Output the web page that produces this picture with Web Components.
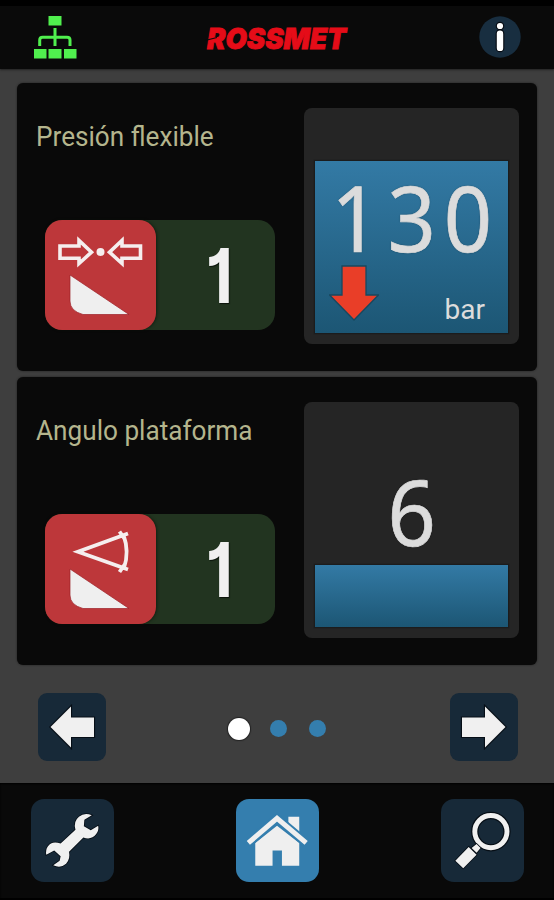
<!DOCTYPE html>
<html lang="es">
<head>
<meta charset="utf-8">
<title>Rossmet</title>
<style>
html,body{margin:0;height:100%;background:#3e3e3e;overflow:hidden}
</style>
</head>
<body>
<rm-app></rm-app>
<script>
const define = (name, html) => {
  const t = document.createElement('template');
  t.innerHTML = html;
  customElements.define(name, class extends HTMLElement {
    constructor() {
      super();
      this.attachShadow({mode: 'open'}).append(t.content.cloneNode(true));
    }
  });
};

/* Each symbol is a viewBox and its artwork. */
const blade = '<path d="M25 55 L84 94.500H38Q25 91 25 81Z" fill="#efefef" stroke="#9c2026" stroke-width=".7"/>';
const ICONS = {
  network: ['0 0 43 43', '<g fill="#50f04e"><rect x="14.500" y="0" width="13" height="9.500"/><rect x="0" y="33" width="12.500" height="9.500"/><rect x="14.500" y="33" width="13" height="9.500"/><rect x="30" y="33" width="12.500" height="9.500"/></g><path d="M21 12V30M5.700 30V24Q5.700 21.200 8.700 21.200H33Q36 21.200 36 24V30" fill="none" stroke="#50f04e" stroke-width="3"/>'],
  info: ['0 0 42 42', '<circle cx="21" cy="21" r="20.700" fill="#182e40"/><g fill="#fff" stroke="#080d14" stroke-width="2.400" paint-order="stroke"><circle cx="21" cy="10" r="3.100"/><rect x="17.800" y="14.500" width="6.400" height="20.600" rx="3.200"/></g>'],
  pressure: ['0 0 111 111', '<g fill="none" stroke="#f5eeee" stroke-width="3.600"><path d="M15 26H34V20.500L46.500 32.200L34 43.500V38.200H15Z"/><path d="M95.500 26H77V20.500L64.500 32.200L77 43.500V38.200H95.500Z"/></g><circle cx="55.500" cy="32" r="4" fill="#f5eeee"/>' + blade],
  angle: ['0 0 111 111', '<path d="M83 19.500L33 37.700L83 55.500M78.500 21Q84.500 37.500 79 54M74.500 17.500L80 25.500M74.500 58L80 50" fill="none" stroke="#f5eeee" stroke-width="3.800"/>' + blade],
  left: ['0 0 68 68', '<path d="M12.500 34L33 13.500V24.500H56V44H33V54.500Z" fill="#f0f0f0" stroke="#060e16" stroke-width="2.200" paint-order="stroke"/>'],
  right: ['0 0 68 68', '<path d="M55.500 34L35 13.500V24.500H12V44H35V54.500Z" fill="#f0f0f0" stroke="#060e16" stroke-width="2.200" paint-order="stroke"/>'],
  wrench: ['0 0 84 84', '<path d="M61.500 16.500Q54 13.500 48.500 18Q42.500 23 45 31L30 45Q21 42 17 48Q14.500 51.500 15.500 56.500L23.500 52L30 58L29 62.500L22.500 67Q30 70.500 35.500 65.500Q40 61 38.500 53.500L53 39Q61 42 66 35.500Q69 31.500 68 27L60.500 31.500L53.500 27.500L54 21Z" fill="#f0f0f0" stroke="#060e16" stroke-width="1.600" paint-order="stroke"/>'],
  home: ['0 0 84 84', '<path d="M41.500 27L19.500 44.500V67.500H37V52H46.500V67.500H64V44.500Z" fill="#efefef"/><path d="M53 18H64V34L53 25Z" fill="#efefef"/><path d="M12.500 44.500L41.500 19.500L71 44.500" fill="none" stroke="#347eae" stroke-width="9"/><path d="M12.500 44.500L41.500 19.500L71 44.500" fill="none" stroke="#efefef" stroke-width="5"/>'],
  search: ['0 0 84 84', '<circle cx="50.500" cy="33" r="16.300" stroke="#060e16" stroke-width="7.500" fill="none"/><circle cx="50.500" cy="33" r="16.300" fill="none" stroke="#f0f0f0" stroke-width="5"/><path d="M31 49.500L36 45.500L40 49.500L36 54.500Z M28 48.500L36 56.500L22.500 70L14.500 62.500Z" fill="#f0f0f0" stroke="#060e16" stroke-width="1.600" paint-order="stroke"/>'],
  down: ['0 0 50 56', '<path d="M13 1H37V30H49.500L25 55L.5 30H13Z" fill="#e93e28" stroke="#17485f" stroke-width="1.300"/>']
};
customElements.define('rm-icon', class extends HTMLElement {
  constructor() { super(); this.attachShadow({mode: 'open'}); }
  connectedCallback() {
    const [box, art] = ICONS[this.getAttribute('name')];
    this.shadowRoot.innerHTML = `<style>:host{display:block}svg{display:block;width:100%;height:100%}</style><svg viewBox="${box}">${art}</svg>`;
  }
});

define('rm-tile', `<style>
:host{display:block;box-sizing:border-box;width:83px;height:83px;border-radius:13px;background:#172938}
:host([active]){background:#347eae}
:host([small]){width:68px;height:68px;border-radius:9px}
::slotted(*){width:100%;height:100%}
</style><slot></slot>`);

define('rm-logo', `<style>
:host{display:block;width:160px;height:40px}svg{display:block}
text{font:italic 900 28.500px Inter,sans-serif;fill:#e50c18;stroke:#e50c18;stroke-width:.8}
</style><svg width="160" height="40" viewBox="0 0 160 40"><text x="10" y="32.500" textLength="139" lengthAdjust="spacingAndGlyphs">ROSSMET</text><path d="M8 24.500L20 21.500" stroke="#0a0a0a" stroke-width="1.200"/></svg>`);

define('rm-selector', `<style>
:host{display:flex;width:230px;height:110px;border-radius:17px;background:#223420}
.symbol{width:111px;height:110px;border-radius:17px;background:#bd373a;box-shadow:1px 0 3px #06130699}
.value{flex:1;display:grid;place-items:center;color:#f0f0f0;font:700 76px/110px Inter,sans-serif;font-feature-settings:"cv01" 1}
.value span{display:block;padding-left:10px;margin-top:-1px;text-shadow:1px 1px 1px #0b140b;transform:scaleX(.85)}
::slotted(rm-icon){width:111px;height:111px}
</style><div class="symbol"><slot name="icon"></slot></div><div class="value"><span><slot></slot></span></div>`);

define('rm-gauge', `<style>
:host{display:grid;box-sizing:border-box;width:215px;height:236px;padding:10px 11px 11px;border-radius:8px;background:#252525;color:#dcdcdc;grid-template:215px/1fr}
.fill,.content{grid-area:1/1}
.fill{align-self:end;height:var(--level);background:linear-gradient(#337aa5,#1c5674);box-shadow:0 0 1px 1px #1b1c1d}
.content{display:grid;grid-template-rows:147px 68px;z-index:1}
.value{font:400 91px/100px "Noto Sans",sans-serif;letter-spacing:8.500px;text-align:center;padding:49px 0 0 9px;height:98px;text-shadow:0 0 2px #0006;-webkit-text-stroke:.7px #dcdcdc;transform:scaleX(.93)}
.foot{display:flex;justify-content:space-between;align-items:flex-start;padding:0 23px 0 14px;font:400 28px/32px Roboto,sans-serif}
::slotted([slot=unit]){margin-top:29px}
::slotted(rm-icon){width:50px;height:56px}
</style><div class="fill"></div><div class="content"><div class="value"><slot></slot></div><div class="foot"><slot name="trend"></slot><slot name="unit"></slot></div></div>`);

define('rm-card', `<style>
:host{display:flex;justify-content:space-between;box-sizing:border-box;width:519.500px;height:288px;padding:25px 17.500px 0 19px;border-radius:6px;background:#090909;box-shadow:0 0 2px #1b1b1b}
.left{display:grid;grid-template-rows:112px 110px}
h2{margin:0;padding-top:12px;font:400 27px/34px Roboto,sans-serif;transform:scaleX(.969);transform-origin:0 0;color:#b4b58d;white-space:nowrap;width:max-content}
.control{padding-left:8.500px}
</style><div class="left"><h2><slot name="title"></slot></h2><div class="control"><slot name="control"></slot></div></div><slot name="gauge"></slot>`);

define('rm-dots', `<style>
:host{display:flex;align-items:center;gap:21.500px}
i{width:17.500px;height:17.500px;border-radius:50%;background:#347eae}
.on{width:22px;height:22px;background:#fff;box-shadow:0 0 1px 1px #222;margin-right:-2px}
</style><i class="on"></i><i></i><i></i>`);

define('rm-app', `<style>
:host{display:grid;grid-template-rows:69px 714px 117px;width:554px;height:900px;background:#3e3e3e}
header{display:flex;justify-content:space-between;align-items:flex-start;box-sizing:border-box;padding:16px 33px 0 34px;background:#0a0a0a;box-shadow:inset 0 6px #000,0 1px 2px #222}
header rm-icon:first-child{width:43px;height:43px}
header rm-icon:last-child{width:42px;height:42px}
rm-logo{margin:0 3px 0 0}
main{display:flex;flex-direction:column;gap:6px;padding:14px 17px 0}
nav{display:flex;align-items:center;justify-content:space-between;padding:22px 19.500px 0 20.500px}
nav rm-dots{padding:3px 1px 0 0}
footer{display:flex;justify-content:space-between;align-items:flex-start;padding:16px 30px 0 31px;background:#090909;box-shadow:inset 0 -2px #000,inset 0 1px 2px #000}
</style>
<header><rm-icon name="network"></rm-icon><rm-logo></rm-logo><rm-icon name="info"></rm-icon></header>
<main>
<rm-card><span slot="title">Presión flexible</span>
<rm-selector slot="control"><rm-icon slot="icon" name="pressure"></rm-icon>1</rm-selector>
<rm-gauge slot="gauge" style="--level:172px">130<rm-icon slot="trend" name="down"></rm-icon><span slot="unit">bar</span></rm-gauge></rm-card>
<rm-card><span slot="title">Angulo plataforma</span>
<rm-selector slot="control"><rm-icon slot="icon" name="angle"></rm-icon>1</rm-selector>
<rm-gauge slot="gauge" style="--level:62px">6</rm-gauge></rm-card>
<nav><rm-tile small><rm-icon name="left"></rm-icon></rm-tile><rm-dots></rm-dots><rm-tile small><rm-icon name="right"></rm-icon></rm-tile></nav>
</main>
<footer><rm-tile><rm-icon name="wrench"></rm-icon></rm-tile><rm-tile active><rm-icon name="home"></rm-icon></rm-tile><rm-tile><rm-icon name="search"></rm-icon></rm-tile></footer>`);
</script>
</body>
</html>
